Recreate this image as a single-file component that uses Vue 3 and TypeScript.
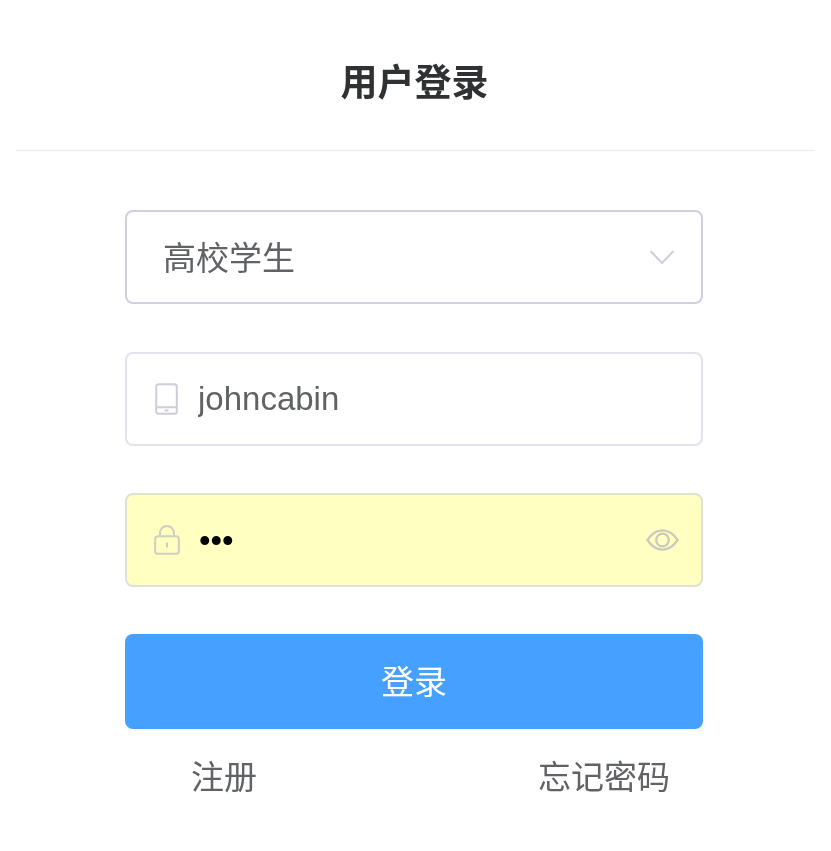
<script setup lang="ts">
import { ref } from 'vue'

const role = ref('高校学生')
const account = ref('johncabin')
const password = ref('abc')
</script>

<template>
  <main class="page">
    <header class="head">
      <h1 class="title">用户登录</h1>
    </header>
    <form class="form" @submit.prevent>
      <div class="field field-select">
        <input v-model="role" class="control select-text" readonly />
        <svg class="chevron" viewBox="0 0 26 16" aria-hidden="true">
          <path d="M1.5 2 L13 14 L24.5 2" />
        </svg>
      </div>
      <div class="field">
        <svg class="icon" viewBox="0 0 23 32" aria-hidden="true">
          <rect x="1.2" y="1.2" width="20.6" height="29.6" rx="2.5" />
          <path d="M1.2 24.2 H21.8 M9.5 27.6 H13.5" />
        </svg>
        <input v-model="account" class="control" />
      </div>
      <div class="field field-filled">
        <svg class="icon" viewBox="0 0 26 30" aria-hidden="true">
          <rect x="1.2" y="11.2" width="23.6" height="17.6" rx="2.5" />
          <path d="M6 11 V8 a7 7 0 0 1 14 0 V11 M13 17.5 V22.5" />
        </svg>
        <input v-model="password" class="control password" type="password" />
        <svg class="eye" viewBox="0 0 34 24" aria-hidden="true">
          <path d="M1.5 12 C6 5 11 2 17 2 C23 2 28 5 32.5 12 C28 19 23 22 17 22 C11 22 6 19 1.5 12 Z" />
          <circle cx="17" cy="12" r="6.5" />
        </svg>
      </div>
      <button class="submit" type="button">登录</button>
      <nav class="links">
        <a class="link">注册</a>
        <a class="link">忘记密码</a>
      </nav>
    </form>
  </main>
</template>

<style>
html, body { margin: 0; background: #fff; }
</style>

<style scoped>
.page {
  width: 831px;
  height: 851px;
  box-sizing: border-box;
  padding: 0 16px;
  font-family: "Liberation Sans", "Noto Sans CJK SC", sans-serif;
  overflow: hidden;
  filter: blur(0.35px);
}
.head {
  height: 151px;
  box-sizing: border-box;
  border-bottom: 1px solid #e9e9ee;
  padding: 59px 2px 0 0;
}
.title {
  margin: 0;
  text-align: center;
  font-size: 37px;
  line-height: 50px;
  font-weight: 700;
  color: #303133;
}
.form {
  width: 578px;
  margin: 59px 0 0 109px;
  display: flex;
  flex-direction: column;
}
.field {
  height: 94px;
  box-sizing: border-box;
  border: 2px solid #e2e3ec;
  border-radius: 8px;
  margin-bottom: 47.5px;
  display: flex;
  align-items: center;
  padding: 0 22px 0 28px;
  background: #fff;
}
.field-select {
  border-color: #cfd0dc;
  padding: 0 26px 0 36px;
}
.field-filled {
  background: #ffffc2;
  border-color: #e0e0d4;
  margin-bottom: 47px;
}
.control {
  flex: 1;
  min-width: 0;
  border: 0;
  outline: 0;
  background: transparent;
  padding: 0;
  font: inherit;
  font-size: 33px;
  color: #606266;
}
.select-text {
  padding-bottom: 2px;
}
.password {
  color: #000;
  padding-top: 2px;
}
.icon {
  width: 23px;
  height: 32px;
  margin-right: 20px;
  fill: none;
  stroke: #cdced8;
  stroke-width: 2;
}
.field-filled .icon {
  width: 26px;
  height: 30px;
  margin-left: -1px;
  margin-right: 19px;
  stroke: #cfcfc0;
}
.chevron {
  width: 26px;
  height: 16px;
  fill: none;
  stroke: #cfd0da;
  stroke-width: 2;
}
.eye {
  width: 33px;
  height: 24px;
  fill: none;
  stroke: #cbcbbc;
  stroke-width: 2.4;
}
.submit {
  height: 95px;
  border: 0;
  border-radius: 8px;
  background: #46a0ff;
  color: #fff;
  font: inherit;
  font-size: 33px;
  padding: 0 0 3px;
}
.links {
  display: flex;
  justify-content: space-between;
  padding: 0 33px 0 66px;
  margin-top: 25px;
  font-size: 33px;
  line-height: 48px;
  color: #606266;
}
</style>
